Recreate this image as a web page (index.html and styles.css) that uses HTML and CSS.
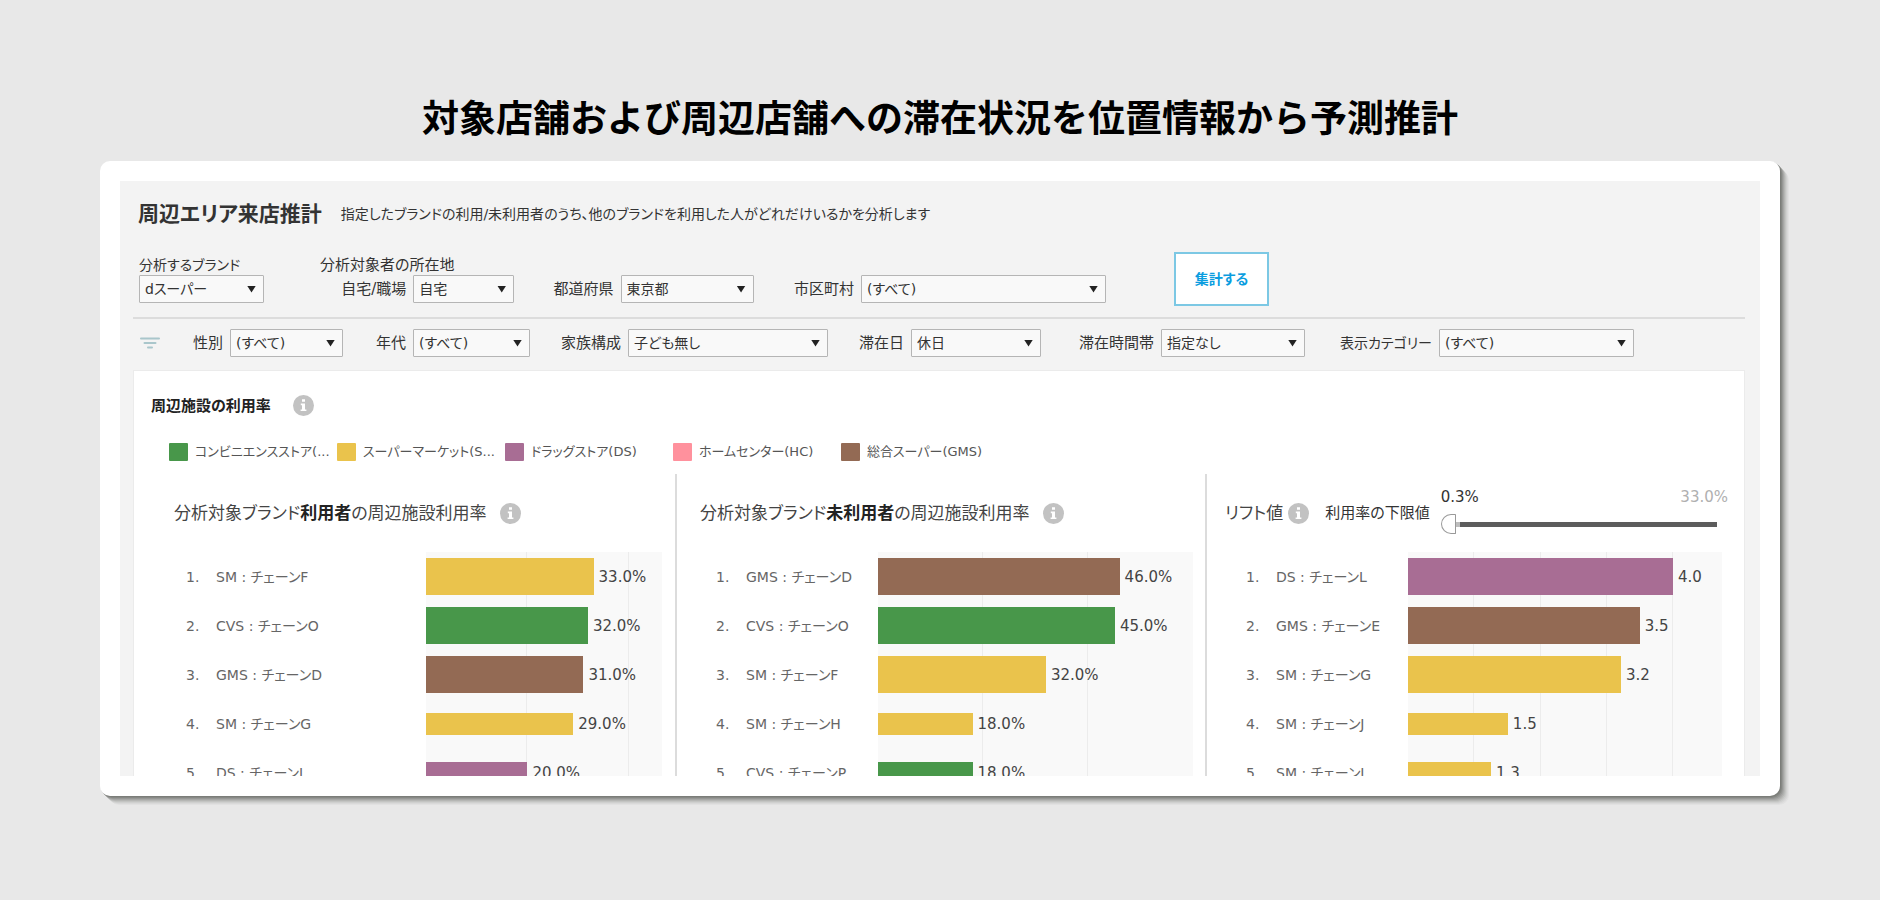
FILE: index.html
```html
<!DOCTYPE html>
<html lang="ja">
<head>
<meta charset="utf-8">
<meta name="viewport" content="width=device-width, initial-scale=1">
<title>周辺エリア来店推計</title>
<link rel="stylesheet" href="styles.css">
</head>
<body>
<svg class="sprite" aria-hidden="true">
  <symbol id="info" viewBox="0 0 21 21">
    <circle cx="10.5" cy="10.5" r="10.5" fill="#c2c2c2"/>
    <path d="M9 4.2h3v2.6H9zM7.8 8.6H12v5.8h1.4v1.6H7.6v-1.6H9v-4.2H7.8z" fill="#fff"/>
  </symbol>
</svg>
<main class="stage">
  <h1 class="headline">対象店舗および周辺店舗への滞在状況を位置情報から予測推計</h1>
  <div class="card">
    <div class="dash">
      <header class="dash-head">
        <h2 class="dash-title">周辺エリア来店推計</h2>
        <p class="dash-note">指定したブランドの利用/未利用者のうち、他のブランドを利用した人がどれだけいるかを分析します</p>
      </header>

      <form class="query">
        <div class="brand">
          <label class="cap cap-mixed" for="brand">分析するブランド</label>
          <span class="pick"><select id="brand"><option>dスーパー</option></select></span>
        </div>
        <fieldset class="place">
          <legend class="cap">分析対象者の所在地</legend>
          <div class="place-fields">
            <div class="field"><label for="base">自宅/職場</label><span class="pick w-base"><select id="base"><option>自宅</option></select></span></div>
            <div class="field"><label for="pref">都道府県</label><span class="pick w-pref"><select id="pref"><option>東京都</option></select></span></div>
            <div class="field"><label for="city">市区町村</label><span class="pick w-city"><select id="city"><option>(すべて)</option></select></span></div>
          </div>
        </fieldset>
        <button class="run" type="button">集計する</button>
      </form>

      <form class="filters">
        <svg class="funnel" viewBox="0 0 20 12" aria-hidden="true"><path d="M1 1.5h18M4.500 6h11M8 10.500h4" stroke="#a9c6cb" stroke-width="2" stroke-linecap="round"/></svg>
        <div class="field"><label for="sex">性別</label><span class="pick w-sex"><select id="sex"><option>(すべて)</option></select></span></div>
        <div class="field"><label for="age">年代</label><span class="pick w-age"><select id="age"><option>(すべて)</option></select></span></div>
        <div class="field"><label for="family">家族構成</label><span class="pick w-family"><select id="family"><option>子ども無し</option></select></span></div>
        <div class="field"><label for="day">滞在日</label><span class="pick w-day"><select id="day"><option>休日</option></select></span></div>
        <div class="field"><label for="time">滞在時間帯</label><span class="pick w-time"><select id="time"><option>指定なし</option></select></span></div>
        <div class="field"><label class="cap-mixed" for="cat">表示カテゴリー</label><span class="pick w-cat"><select id="cat"><option>(すべて)</option></select></span></div>
      </form>

      <section class="panel">
        <div class="panel-head">
          <h3 class="panel-title">周辺施設の利用率</h3>
          <svg class="info" role="img" aria-label="情報"><use href="#info"/></svg>
        </div>
        <ul class="legend">
          <li><i class="swatch cvs"></i>コンビニエンスストア(...</li>
          <li><i class="swatch sm"></i>スーパーマーケット(S...</li>
          <li><i class="swatch ds"></i>ドラッグストア(DS)</li>
          <li><i class="swatch hc"></i>ホームセンター(HC)</li>
          <li><i class="swatch gms"></i>総合スーパー(GMS)</li>
        </ul>

        <div class="charts">
          <section class="chart users">
            <div class="chart-head">
              <h4 class="chart-title">分析対象ブランド<b>利用者</b>の周辺施設利用率</h4>
              <svg class="info" role="img" aria-label="情報"><use href="#info"/></svg>
            </div>
            <ol class="rows">
              <li><span>1.</span><span>SM : チェーンF</span><div class="plot"><i class="bar sm" style="width:71%"></i><span class="val">33.0%</span></div></li>
              <li><span>2.</span><span>CVS : チェーンO</span><div class="plot"><i class="bar cvs" style="width:68.6%"></i><span class="val">32.0%</span></div></li>
              <li><span>3.</span><span>GMS : チェーンD</span><div class="plot"><i class="bar gms" style="width:66.7%"></i><span class="val">31.0%</span></div></li>
              <li><span>4.</span><span>SM : チェーンG</span><div class="plot"><i class="bar thin sm" style="width:62.4%"></i><span class="val">29.0%</span></div></li>
              <li><span>5.</span><span>DS : チェーンL</span><div class="plot"><i class="bar thin ds" style="width:43%"></i><span class="val">20.0%</span></div></li>
            </ol>
          </section>

          <section class="chart nonusers">
            <div class="chart-head">
              <h4 class="chart-title">分析対象ブランド<b>未利用者</b>の周辺施設利用率</h4>
              <svg class="info" role="img" aria-label="情報"><use href="#info"/></svg>
            </div>
            <ol class="rows">
              <li><span>1.</span><span>GMS : チェーンD</span><div class="plot"><i class="bar gms" style="width:76.7%"></i><span class="val">46.0%</span></div></li>
              <li><span>2.</span><span>CVS : チェーンO</span><div class="plot"><i class="bar cvs" style="width:75.2%"></i><span class="val">45.0%</span></div></li>
              <li><span>3.</span><span>SM : チェーンF</span><div class="plot"><i class="bar sm" style="width:53.3%"></i><span class="val">32.0%</span></div></li>
              <li><span>4.</span><span>SM : チェーンH</span><div class="plot"><i class="bar thin sm" style="width:30%"></i><span class="val">18.0%</span></div></li>
              <li><span>5.</span><span>CVS : チェーンP</span><div class="plot"><i class="bar thin cvs" style="width:30%"></i><span class="val">18.0%</span></div></li>
            </ol>
          </section>

          <section class="chart lift">
            <div class="chart-head">
              <h4 class="chart-title">リフト値</h4>
              <svg class="info" role="img" aria-label="情報"><use href="#info"/></svg>
              <label class="floor-label" for="floor">利用率の下限値</label>
              <div class="floor">
                <div class="floor-values"><span>0.3%</span><span class="floor-max">33.0%</span></div>
                <input class="slider" id="floor" type="range" min="0.3" max="33" step="0.1" value="0.3">
              </div>
            </div>
            <ol class="rows">
              <li><span>1.</span><span>DS : チェーンL</span><div class="plot"><i class="bar ds" style="width:84.4%"></i><span class="val">4.0</span></div></li>
              <li><span>2.</span><span>GMS : チェーンE</span><div class="plot"><i class="bar gms" style="width:73.8%"></i><span class="val">3.5</span></div></li>
              <li><span>3.</span><span>SM : チェーンG</span><div class="plot"><i class="bar sm" style="width:67.8%"></i><span class="val">3.2</span></div></li>
              <li><span>4.</span><span>SM : チェーンJ</span><div class="plot"><i class="bar thin sm" style="width:31.8%"></i><span class="val">1.5</span></div></li>
              <li><span>5.</span><span>SM : チェーンI</span><div class="plot"><i class="bar thin sm" style="width:26.4%"></i><span class="val">1.3</span></div></li>
            </ol>
          </section>
        </div>
      </section>
    </div>
  </div>
</main>
</body>
</html>
```
FILE: styles.css
```css
* { box-sizing: border-box; }

body {
  margin: 0;
  background: #e8e8e8;
  color: #333;
  font-family: "DejaVu Sans", "Noto Sans CJK JP", sans-serif;
  font-size: 14px;
  line-height: 20px;
}

h1, h2, h3, h4, p, ul, ol { margin: 0; padding: 0; }
ul, ol { list-style: none; }

.sprite { display: none; }

.stage { padding: 92px 100px; }

.headline {
  margin-bottom: 21px;
  color: #000;
  font-family: "Noto Sans CJK JP", sans-serif;
  font-size: 37px;
  font-weight: 700;
  line-height: 48px;
  text-align: center;
}

.card {
  padding: 20px;
  background: #fff;
  border-radius: 10px;
  box-shadow:
    1px 1px #7b7d79, 2px 2px #868884, 3px 3px #969795,
    4px 4px #a6a7a5, 5px 5px #b5b6b4, 6px 6px #c3c4c2,
    7px 7px #cfd0cf, 8px 8px #d9d9d9, 9px 9px #e1e1e1;
}

.dash {
  max-height: 595px;
  overflow: hidden;
  padding: 17px 15px 0 13px;
  background: #f3f3f3;
  font-feature-settings: "palt";
}

.dash-head {
  display: flex;
  align-items: center;
  gap: 19px;
  padding-left: 5px;
}
.dash-title { font-size: 21px; font-weight: 700; line-height: 32px; }
.dash-note { font-size: 14px; line-height: 32px; }

.query {
  display: grid;
  grid-template-columns: 125px minmax(0, 1fr) 95px;
  align-items: start;
  margin: 22px 0 11px;
  padding: 0 476px 0 6px;
}
.brand { padding-top: 3px; }
.cap { display: block; padding: 0; font-size: 15px; line-height: 20px; white-space: nowrap; }
.brand .cap, .cap-mixed { font-size: 14px; }

.place { margin: 0 68px 0 56px; padding: 3px 0 0; border: 0; min-width: 0; }
.place legend { float: left; width: 100%; }
.place-fields {
  clear: both;
  display: grid;
  grid-template-columns: 194fr 239fr 352fr;
}

.field {
  display: flex;
  align-items: center;
  justify-content: flex-end;
  gap: 7px;
  font-size: 15px;
  white-space: nowrap;
}

.pick { display: grid; align-items: center; }
.pick::after {
  content: "";
  grid-area: 1 / 1;
  justify-self: end;
  width: 9px;
  height: 7px;
  margin-right: 8px;
  background: #222;
  clip-path: polygon(0 0, 100% 0, 50% 100%);
  pointer-events: none;
}
.pick select {
  grid-area: 1 / 1;
  appearance: none;
  width: 100%;
  height: 28px;
  padding: 0 20px 0 5px;
  border: 1px solid #b5b5b5;
  border-radius: 1px;
  background: #f9f9f9;
  color: #333;
  font: inherit;
  font-size: 14px;
  font-feature-settings: "palt";
}
.w-base { width: 101px; }
.w-pref { width: 133px; }
.w-city { width: 245px; }
.w-sex { width: 113px; }
.w-age { width: 117px; }
.w-family { width: 200px; }
.w-day { width: 130px; }
.w-time { width: 144px; }
.w-cat { width: 195px; }

.run {
  height: 54px;
  border: 2px solid #7cc8e4;
  background: #fff;
  color: #0a9ddf;
  font: inherit;
  font-size: 14px;
  font-weight: 700;
}

.filters {
  display: grid;
  grid-template-columns: 27fr 183fr 187fr 298fr 213fr 264fr 329fr;
  align-items: center;
  padding: 10px 111px 13px 0;
  border-top: 2px solid #dcdcdc;
}
.funnel { width: 20px; height: 12px; margin-left: 7px; }

.panel {
  padding-top: 24px;
  border: 1px solid #ebebeb;
  background: #fff;
}
.panel-head {
  display: flex;
  align-items: center;
  gap: 22px;
  padding-left: 17px;
}
.panel-title { font-size: 15px; font-weight: 700; line-height: 20px; color: #222; }
.info { flex: none; width: 21px; height: 21px; }

.legend {
  display: grid;
  grid-template-columns: repeat(5, 168px);
  margin: 26px 0 12px 35px;
  font-size: 13px;
  line-height: 20px;
  color: #555;
}
.legend li { display: flex; align-items: center; gap: 7px; white-space: nowrap; }
.swatch { width: 19px; height: 18px; border-radius: 1px; }

.cvs { background: #48974a; }
.sm { background: #eac34c; }
.ds { background: #a86d94; }
.hc { background: #ff919d; }
.gms { background: #936a54; }

.charts {
  display: grid;
  grid-template-columns: 541fr 530fr 539fr;
}
.chart + .chart { border-left: 2px solid #dcdcdc; }
.chart-head {
  display: flex;
  align-items: center;
  gap: 13px;
  height: 78px;
  white-space: nowrap;
}
.chart-title { font-size: 17px; font-weight: 400; line-height: 24px; color: #444; }
.chart-title b { color: #222; }

.users .chart-head { padding-left: 40px; }
.nonusers .chart-head { padding-left: 23px; }
.lift .chart-head { gap: 5px; padding: 0 16px 0 18px; }

.floor-label { margin: 0 6px 0 11px; font-size: 15px; }
.floor { flex: 1; min-width: 0; padding-bottom: 5px; }
.floor-values { display: flex; justify-content: space-between; font-size: 15px; }
.floor-max { color: #b0b0b0; }

.slider {
  appearance: none;
  display: block;
  width: calc(100% - 11px);
  height: 20px;
  margin: 7px 0 0;
  background: linear-gradient(90deg, transparent 15px, #bdbdbd 15px 19px, #5c5c5c 19px) center / 100% 5px no-repeat;
}
.slider::-webkit-slider-thumb {
  appearance: none;
  width: 15px;
  height: 20px;
  border: 1px solid #999;
  border-radius: 12px 1px 1px 12px;
  background: #fff;
}

.rows li {
  display: grid;
  align-items: center;
  height: 49px;
  color: #666;
  white-space: nowrap;
}
.users li { grid-template-columns: 30px 210px 1fr; padding: 0 13px 0 52px; }
.nonusers li { grid-template-columns: 30px 132px 1fr; padding: 0 12px 0 39px; }
.lift li { grid-template-columns: 30px 132px 1fr; padding: 0 22px 0 39px; }

.plot {
  display: flex;
  align-items: center;
  gap: 5px;
  height: 100%;
  background-color: #f9f9f9;
}
.users .plot {
  background-image: repeating-linear-gradient(90deg, transparent 0 calc(43% - 1px), #ececec calc(43% - 1px) 43%);
}
.nonusers .plot {
  background-image: repeating-linear-gradient(90deg, transparent 0 calc(33.4% - 1px), #ececec calc(33.4% - 1px) 33.4%);
}
.lift .plot {
  background-image: repeating-linear-gradient(90deg, transparent 0 calc(21.1% - 1px), #ececec calc(21.1% - 1px) 21.1%);
}
.bar { flex: none; height: 37px; }
.bar.thin { height: 22px; }
.val { font-size: 15px; color: #444; }
```
